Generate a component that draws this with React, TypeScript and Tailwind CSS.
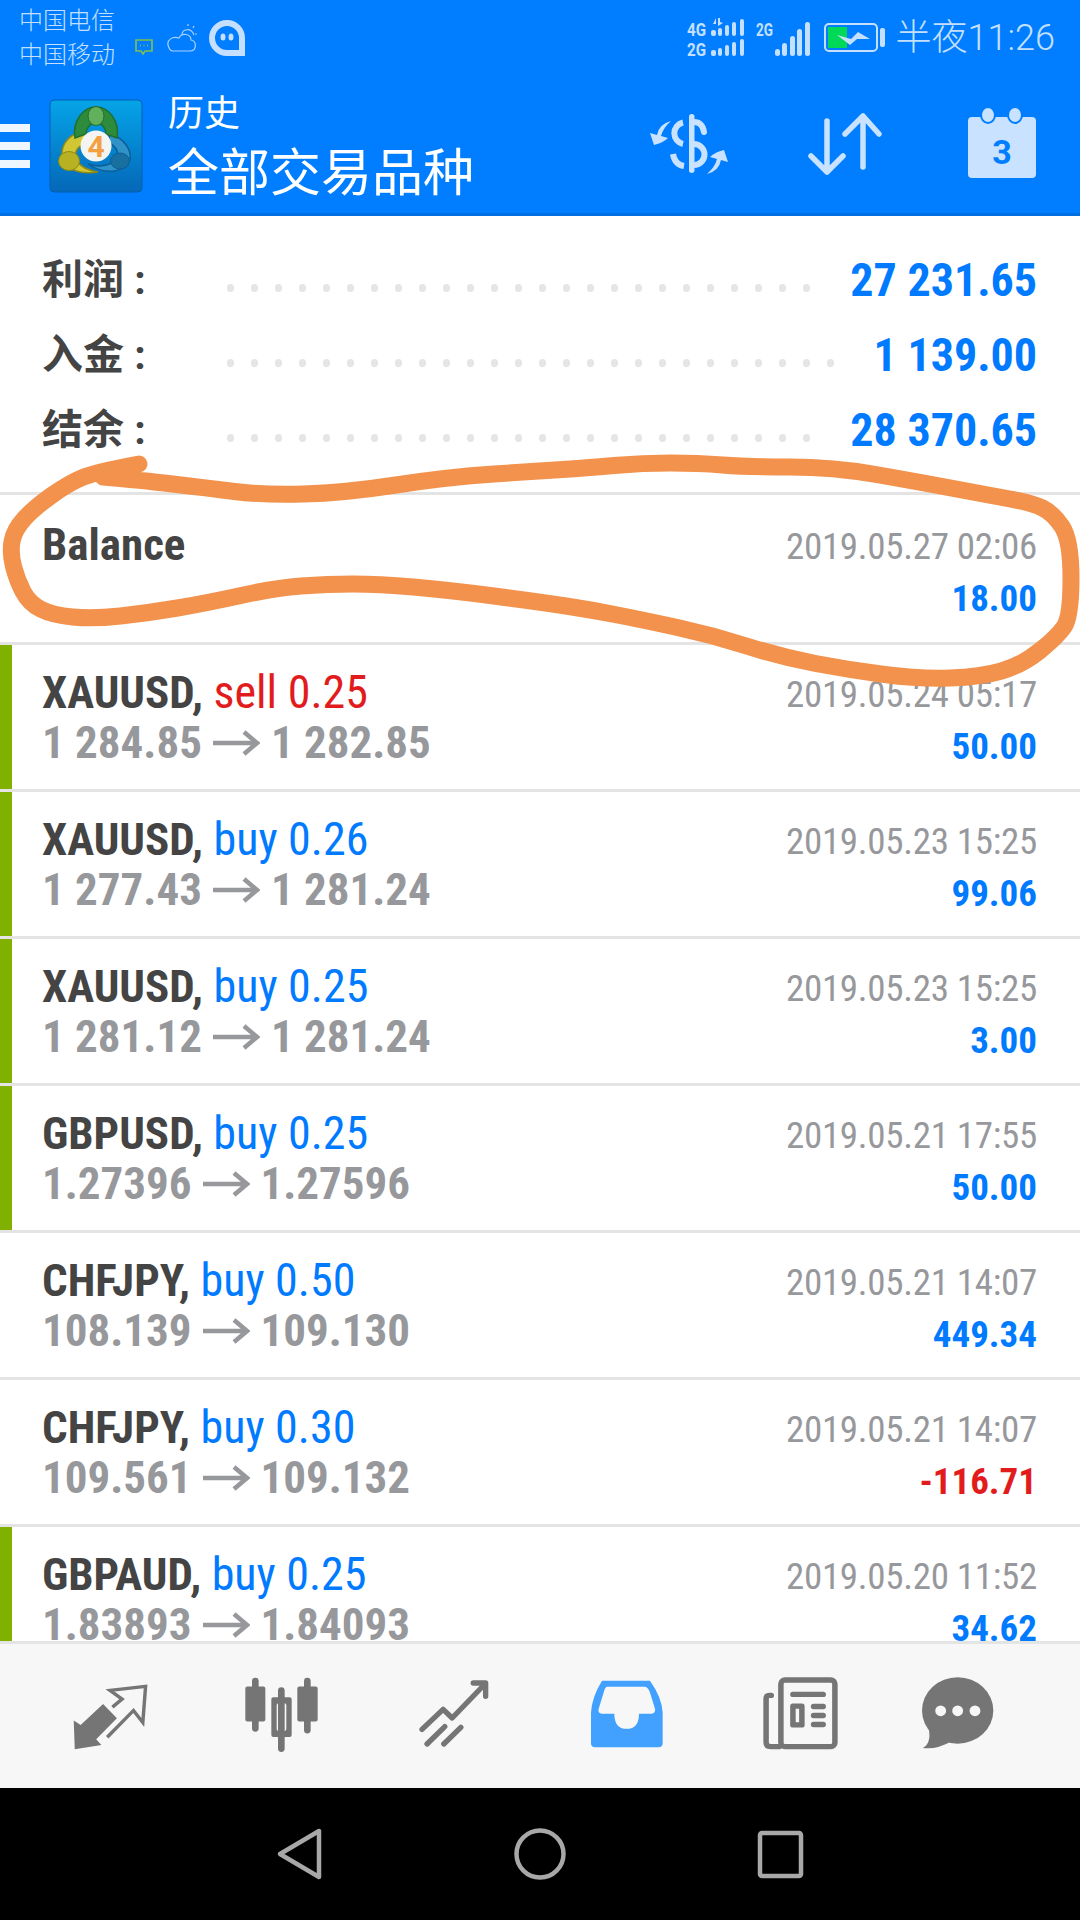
const SANS = "font-['Roboto','Noto_Sans_CJK_SC',sans-serif]";

type Trade = {
  symbol: string;
  side: string;
  sideRed?: boolean;
  from: string;
  to: string;
  time: string;
  profit: string;
  bar?: boolean;
};

const trades: Trade[] = [
  { symbol: "XAUUSD", side: "sell 0.25", sideRed: true, from: "1 284.85", to: "1 282.85", time: "2019.05.24 05:17", profit: "50.00", bar: true },
  { symbol: "XAUUSD", side: "buy 0.26", from: "1 277.43", to: "1 281.24", time: "2019.05.23 15:25", profit: "99.06", bar: true },
  { symbol: "XAUUSD", side: "buy 0.25", from: "1 281.12", to: "1 281.24", time: "2019.05.23 15:25", profit: "3.00", bar: true },
  { symbol: "GBPUSD", side: "buy 0.25", from: "1.27396", to: "1.27596", time: "2019.05.21 17:55", profit: "50.00", bar: true },
  { symbol: "CHFJPY", side: "buy 0.50", from: "108.139", to: "109.130", time: "2019.05.21 14:07", profit: "449.34" },
  { symbol: "CHFJPY", side: "buy 0.30", from: "109.561", to: "109.132", time: "2019.05.21 14:07", profit: "-116.71" },
  { symbol: "GBPAUD", side: "buy 0.25", from: "1.83893", to: "1.84093", time: "2019.05.20 11:52", profit: "34.62", bar: true },
];

const summary = [
  { label: "利润", value: "27 231.65", dots: 25 },
  { label: "入金", value: "1 139.00", dots: 26 },
  { label: "结余", value: "28 370.65", dots: 25 },
];

// the hand drawn circle, in page pixels
const scribble: [number, number][] = [
  [139, 464], [96, 472], [69, 483], [34, 508], [14, 530], [10, 553], [17, 580], [29, 603], [52, 615], [93, 619],
  [148, 613], [207, 603], [275, 588], [327, 584], [379, 584], [448, 590], [540, 602], [592, 610], [643, 620],
  [712, 635], [781, 657], [850, 670], [919, 679], [981, 677], [1022, 665], [1057, 637], [1071, 617], [1071, 540],
  [1053, 513], [1032, 503], [988, 495], [919, 482], [833, 467], [747, 467], [698, 463], [643, 463], [585, 468],
  [540, 471], [448, 477], [344, 493], [262, 495], [207, 488], [138, 480], [103, 477],
];

function scribblePath() {
  let d = `M${scribble[0][0]},${scribble[0][1]}`;
  for (let i = 1; i < scribble.length - 1; i++) {
    const [x, y] = scribble[i];
    const [nx, ny] = scribble[i + 1];
    d += ` Q${x},${y} ${(x + nx) / 2},${(y + ny) / 2}`;
  }
  const last = scribble[scribble.length - 1];
  return d + ` L${last[0]},${last[1]}`;
}

const Arrow = () => (
  <svg width="47" height="26" viewBox="0 0 47 26" className="ml-[11px] mr-[11px] inline-block" fill="none" stroke="#97989c" strokeWidth="4.5">
    <path d="M0 13H44M31 2L44 13L31 24" />
  </svg>
);

const TradeRow = ({ t }: { t: Trade }) => (
  <div className="relative flex h-[147px] shrink-0 justify-between border-b-[3px] border-[#e4e4e4] bg-white">
    {t.bar && <div className="absolute left-0 top-0 h-full w-[12px] bg-[#80b000]" />}
    <div className="pl-[42px] pt-[21px]">
      <div className="text-[45px] leading-[52px] [font-stretch:75%] whitespace-nowrap">
        <span className="font-bold text-[#444444]">{t.symbol}, </span>
        <span className={`text-[46px] ${t.sideRed ? "text-[#e21c1c]" : "text-[#007aff]"}`}>{t.side}</span>
      </div>
      <div className="flex items-center text-[45px] leading-[48px] font-bold text-[#97989c] [font-stretch:75%] whitespace-nowrap">
        {t.from}
        <Arrow />
        {t.to}
      </div>
    </div>
    <div className="pr-[43px] pt-[24px] text-right">
      <div className="text-[37px] leading-[52px] tracking-[-0.3px] text-[#97989c] [font-stretch:75%] whitespace-nowrap">{t.time}</div>
      <div className={`text-[37px] leading-[52px] font-bold [font-stretch:75%] ${t.profit.startsWith("-") ? "text-[#e21c1c]" : "text-[#007aff]"}`}>
        {t.profit}
      </div>
    </div>
  </div>
);

const Logo = () => (
  <svg width="110" height="110" viewBox="0 0 110 110" className="-mx-[10px] -my-[10px] shrink-0">
    <defs>
      <linearGradient id="lg" x1="0" y1="0" x2="0" y2="1">
        <stop offset="0" stopColor="#05a4e8" />
        <stop offset="1" stopColor="#0468b8" />
      </linearGradient>
    </defs>
    <rect x="10" y="10" width="92" height="92" rx="4" fill="url(#lg)" stroke="#0560ac" />
    <path d="M70 44C84 48 92 60 90 70C86 82 66 86 48 74C60 78 72 76 78 66C78 58 72 54 68 52Z" fill="#2f93c9" stroke="#0b5f98" strokeWidth="1.5" />
    <path d="M46 42C30 42 21 54 22 66C23 78 38 85 58 82C46 80 40 76 37 71C34 64 35 58 44 54Z" fill="#d1c735" stroke="#8f8a14" strokeWidth="1.5" />
    <path d="M35 48C32 30 44 17 56 17C68 17 80 30 77 48L66 44C66 38 62 33 56 33C50 33 46 38 46 44Z" fill="#2f8b3c" stroke="#1f6f2f" strokeWidth="1.5" />
    <ellipse cx="56" cy="26" rx="8" ry="9.5" fill="#63b05c" stroke="#1f6f2f" />
    <ellipse cx="29" cy="71" rx="10.5" ry="9.5" fill="#b8b222" stroke="#8f8a14" />
    <ellipse cx="80" cy="71" rx="9.5" ry="8" fill="#17709f" stroke="#0b5f98" />
    <circle cx="56" cy="56" r="15.5" fill="#f4f4f2" />
    <text x="56" y="67" textAnchor="middle" fontSize="30" fontWeight="700" fontFamily="Roboto, sans-serif" fill="#f4a040">4</text>
  </svg>
);

const SignalIcons = () => (
  <svg width="132" height="42" viewBox="0 0 132 42" fill="#c5e0ff" className="shrink-0">
    <text x="0" y="19" fontSize="18" fontWeight="700" fontFamily="Roboto, sans-serif" textLength="19" lengthAdjust="spacingAndGlyphs">4G</text>
    <text x="0" y="39" fontSize="18" fontWeight="700" fontFamily="Roboto, sans-serif" textLength="19" lengthAdjust="spacingAndGlyphs">2G</text>
    <path d="M26 7L29 1V7ZM31 1H33V5L36 6L31 9Z" />
    <rect x="24" y="13" width="5" height="6" rx="2" />
    <rect x="31" y="11" width="4" height="8" rx="2" />
    <rect x="38" y="8" width="4" height="11" rx="2" />
    <rect x="45" y="5" width="4" height="14" rx="2" />
    <rect x="53" y="2" width="4" height="17" rx="2" />
    <rect x="24" y="33" width="5" height="6" rx="2" />
    <rect x="31" y="31" width="4" height="8" rx="2" />
    <rect x="38" y="28" width="4" height="11" rx="2" />
    <rect x="45" y="25" width="4" height="14" rx="2" />
    <rect x="53" y="22" width="4" height="17" rx="2" />
    <text x="69" y="19" fontSize="18" fontWeight="700" fontFamily="Roboto, sans-serif" textLength="17" lengthAdjust="spacingAndGlyphs">2G</text>
    <rect x="88" y="32" width="5" height="7" rx="2.5" />
    <rect x="95" y="26" width="5" height="13" rx="2.5" />
    <rect x="103" y="19" width="5" height="20" rx="2.5" />
    <rect x="110" y="12" width="5" height="27" rx="2.5" />
    <rect x="118" y="5" width="5" height="34" rx="2.5" />
  </svg>
);

const Battery = () => (
  <svg width="62" height="30" viewBox="0 0 62 30" className="shrink-0">
    <rect x="1" y="1" width="52" height="27" rx="4" fill="none" stroke="#c5e0ff" strokeWidth="2" />
    <rect x="4" y="4" width="19" height="21" fill="#00d858" />
    <path d="M13 12L27 16L34 9L46 16H33L26 22Z" fill="#c5e0ff" />
    <rect x="56" y="5" width="5" height="19" rx="2" fill="#c5e0ff" />
  </svg>
);

const DollarIcon = () => (
  <svg width="100" height="90" viewBox="0 0 100 90" className="mt-[4px] shrink-0" fill="#c8e2ff">
    <rect x="50" y="12" width="5.5" height="59" rx="2.7" />
    <path d="M44 20.5A11 11 0 0 0 44 42" fill="none" stroke="#c8e2ff" strokeWidth="6" />
    <path d="M55 20C61 20 64 24 65 30" fill="none" stroke="#c8e2ff" strokeWidth="6" strokeLinecap="round" />
    <path d="M55 42A10 10 0 0 1 55 63" fill="none" stroke="#c8e2ff" strokeWidth="6" />
    <path d="M34 52C35 58 38 63 45 64" fill="none" stroke="#c8e2ff" strokeWidth="6" />
    <path d="M32 19Q20 22 18 33L11 31L15 43Q24 41 29 36L22 34Q24 26 32 19Z" />
    <path d="M32 19Q20 22 18 33L11 31L15 43Q24 41 29 36L22 34Q24 26 32 19Z" transform="rotate(180 50 45.5)" />
  </svg>
);

const ArrowsIcon = () => (
  <svg width="74" height="64" viewBox="0 0 74 64" className="mb-[2px] shrink-0" fill="none" stroke="#c8e2ff" strokeWidth="5.5" strokeLinecap="round" strokeLinejoin="round">
    <path d="M19 9V60M3 44L19 60L35 44" />
    <path d="M55 55V4M37 22L55 4L71 22" />
  </svg>
);

const CalendarIcon = () => (
  <svg width="70" height="72" viewBox="0 0 70 72" className="mb-[3px] shrink-0">
    <rect x="1" y="10" width="68" height="61" rx="4" fill="#c8e2ff" />
    <ellipse cx="21" cy="8" rx="7" ry="8" fill="#c8e2ff" stroke="#007eff" strokeWidth="2" />
    <ellipse cx="48" cy="8" rx="7" ry="8" fill="#c8e2ff" stroke="#007eff" strokeWidth="2" />
    <text x="35" y="57" textAnchor="middle" fontSize="34" fontWeight="700" fontFamily="Roboto, sans-serif" fill="#007eff">3</text>
  </svg>
);

const App = () => {
  return (
    <div className={`relative flex h-[1920px] w-[1080px] flex-col overflow-hidden bg-white ${SANS}`}>
      {/* header */}
      <div className="h-[216px] shrink-0 border-b-[3px] border-[#0070e0] bg-[#007eff]">
        <div className="flex h-[76px] items-center pl-[19px] pr-[25px] text-[#c5e0ff]">
          <div className="text-[24px] leading-[34px] font-light">
            <div>中国电信</div>
            <div>中国移动</div>
          </div>
          {/* small notification icons */}
          <svg width="18" height="16" viewBox="0 0 18 16" className="ml-[20px] mt-[18px] shrink-0" fill="none" stroke="#7fc050" strokeWidth="1.6">
            <path d="M1 1H17V12H10L8 15L6 12H1Z" />
            <path d="M5 6.5H6M8.5 6.5H9.5M12 6.5H13" />
          </svg>
          <svg width="30" height="30" viewBox="0 0 30 30" className="ml-[14px] shrink-0" fill="none" stroke="#a8d0ff" strokeWidth="1.2">
            <path d="M6 28H23C30 28 30 18 24 17C24 11 15 9 12 15C5 13 0 17 1 22C2 26 4 28 6 28Z" />
            <path d="M15 12C15 6 24 4 27 12M21 1V3M27 3L26 5M30 11H28" />
          </svg>
          <svg width="36" height="36" viewBox="0 0 36 36" className="ml-[12px] shrink-0">
            <path d="M18 3A15 15 0 0 0 18 33H33V18A15 15 0 0 0 18 3Z" fill="none" stroke="#c5e0ff" strokeWidth="6" />
            <ellipse cx="14" cy="17" rx="2.5" ry="3.5" fill="#c5e0ff" />
            <ellipse cx="22" cy="17" rx="2.5" ry="3.5" fill="#c5e0ff" />
          </svg>
          <div className="ml-auto flex items-center">
            <SignalIcons />
            <div className="ml-[5px]">
              <Battery />
            </div>
            <div className="ml-[10px] text-[36px] font-light leading-none whitespace-nowrap">半夜11:26</div>
          </div>
        </div>
        <div className="flex h-[137px] items-center">
          <div className="mt-[3px] flex w-[30px] shrink-0 flex-col gap-[10px] self-center">
            <div className="h-[8px] bg-[#eef6ff]" />
            <div className="h-[8px] bg-[#eef6ff]" />
            <div className="h-[8px] bg-[#eef6ff]" />
          </div>
          <div className="ml-[20px]">
            <Logo />
          </div>
          <div className="ml-[28px] mt-[6px] text-white">
            <div className="text-[36px] leading-[44px]">历史</div>
            <div className="mt-[8px] text-[51px] leading-[60px]">全部交易品种</div>
          </div>
          <div className="ml-auto flex items-center pr-[43px]">
            <DollarIcon />
            <div className="ml-[69px]">
              <ArrowsIcon />
            </div>
            <div className="ml-[85px]">
              <CalendarIcon />
            </div>
          </div>
        </div>
      </div>

      {/* account summary */}
      <div className="h-[276px] shrink-0 pt-[27px]">
        {summary.map((s) => (
          <div key={s.label} className="flex h-[75px] items-center pl-[42px] pr-[43px]">
            <div className="w-[185px] shrink-0 text-[41px] font-bold text-[#444444] whitespace-nowrap">{s.label} :</div>
            <div className="mt-[14px] flex gap-[17px]">
              {Array.from({ length: s.dots }).map((_, i) => (
                <div key={i} className="h-[8px] w-[7px] rounded-full bg-[#e5e5e5]" />
              ))}
            </div>
            <div className="ml-auto text-[46px] font-bold text-[#007aff] [font-stretch:80%] whitespace-nowrap">{s.value}</div>
          </div>
        ))}
      </div>

      {/* deals */}
      <div className="flex min-h-0 flex-1 flex-col overflow-hidden border-t-[3px] border-[#e4e4e4]">
        <div className="flex h-[150px] shrink-0 justify-between border-b-[3px] border-[#e4e4e4] bg-white">
          <div className="pl-[42px] pt-[24px] text-[45px] leading-[52px] font-bold text-[#444444] [font-stretch:75%]">Balance</div>
          <div className="pr-[43px] pt-[26px] text-right">
            <div className="text-[37px] leading-[52px] tracking-[-0.3px] text-[#97989c] [font-stretch:75%]">2019.05.27 02:06</div>
            <div className="text-[37px] leading-[52px] font-bold text-[#007aff] [font-stretch:75%]">18.00</div>
          </div>
        </div>
        {trades.map((t, i) => (
          <TradeRow key={i} t={t} />
        ))}
      </div>

      {/* bottom tabs */}
      <div className="flex h-[147px] shrink-0 items-start border-t-[3px] border-[#e4e4e4] bg-[#f7f7f7] pl-[72px] pt-[33px]">
        <svg width="76" height="67" viewBox="210 150 220 200" preserveAspectRatio="none" className="mt-[6px] shrink-0">
          <path d="M215 262L235 275L300 213L340 255L280 318L295 335L218 348Z" fill="#757575" />
          <path d="M327 222L355 198L320 172L423 160L415 268L388 232L312 312" fill="none" stroke="#757575" strokeWidth="10" />
        </svg>
        <svg width="75" height="76" viewBox="705 140 225 225" preserveAspectRatio="none" className="ml-[96px] shrink-0">
          <g fill="#757575">
            <rect x="729" y="142" width="20" height="160" rx="10" />
            <rect x="709" y="168" width="60" height="104" rx="6" />
            <rect x="807" y="170" width="20" height="192" rx="10" />
            <path fillRule="evenodd" d="M793 200H842Q848 200 848 206V312Q848 318 842 318H793Q787 318 787 312V206Q787 200 793 200ZM809 218Q803 218 803 224V294Q803 300 809 300H826Q832 300 832 294V224Q832 218 826 218Z" />
            <rect x="885" y="142" width="20" height="165" rx="10" />
            <rect x="865" y="168" width="61" height="104" rx="6" />
          </g>
        </svg>
        <svg width="72" height="68" viewBox="1210 148 215 204" preserveAspectRatio="none" className="ml-[99px] mt-[3px] shrink-0" fill="none" stroke="#757575" strokeWidth="16" strokeLinecap="round" strokeLinejoin="round">
          <path d="M1222 296L1285 236L1312 262L1410 160M1375 157H1412V197" />
          <path d="M1237 340L1290 288M1287 340L1338 290" />
        </svg>
        <svg width="72" height="68" viewBox="148 148 210 202" preserveAspectRatio="none" className="ml-[101px] mt-[3px] shrink-0">
          <path fill="#42a0ff" d="M148 335V245Q150 200 180 150H320Q355 200 357 245V335Q357 348 345 348H160Q148 348 148 335Z" />
          <path fill="#f7f7f7" d="M195 168H305Q315 170 320 185L335 235Q335 248 325 248H288Q288 293 252 293Q216 293 216 248H180Q168 248 170 235L185 185Q188 170 195 168Z" />
        </svg>
        <svg width="75" height="73" viewBox="648 140 218 218" preserveAspectRatio="none" className="ml-[100px] shrink-0" fill="none" stroke="#757575" strokeWidth="16" strokeLinecap="round">
          <rect x="700" y="149" width="157" height="199" rx="12" />
          <path d="M672 195H666Q657 195 657 205V335Q657 348 670 348H695" />
          <path d="M735 192H823M795 228H823M795 255H823M795 282H823" />
          <path d="M735 227H761V283H735Z" strokeLinejoin="round" />
        </svg>
        <svg width="72" height="73" viewBox="1108 140 212 218" preserveAspectRatio="none" className="ml-[84px] shrink-0">
          <ellipse cx="1213" cy="240" rx="105" ry="99" fill="#757575" />
          <path d="M1128 295Q1136 338 1110 352Q1150 358 1195 332Z" fill="#757575" />
          <circle cx="1163" cy="241" r="16" fill="#f7f7f7" />
          <circle cx="1213" cy="241" r="16" fill="#f7f7f7" />
          <circle cx="1264" cy="241" r="16" fill="#f7f7f7" />
        </svg>
      </div>

      {/* android nav bar */}
      <div className="flex h-[132px] shrink-0 items-center justify-center bg-black">
        <svg width="540" height="60" viewBox="270 1824 540 60" className="shrink-0" fill="none" stroke="#a8a8a8" strokeWidth="4.5" strokeLinejoin="round">
          <path d="M280 1854L319 1831V1877Z" />
          <circle cx="540" cy="1854" r="23.5" />
          <rect x="760" y="1833" width="41" height="43" rx="2" />
        </svg>
      </div>

      {/* hand drawn mark over the screenshot */}
      <svg width="1080" height="1920" viewBox="0 0 1080 1920" className="pointer-events-none absolute left-0 top-0" fill="none">
        <path d={scribblePath()} stroke="#f2924c" strokeWidth="17" strokeLinecap="round" strokeLinejoin="round" />
      </svg>
    </div>
  );
};

export default App;
